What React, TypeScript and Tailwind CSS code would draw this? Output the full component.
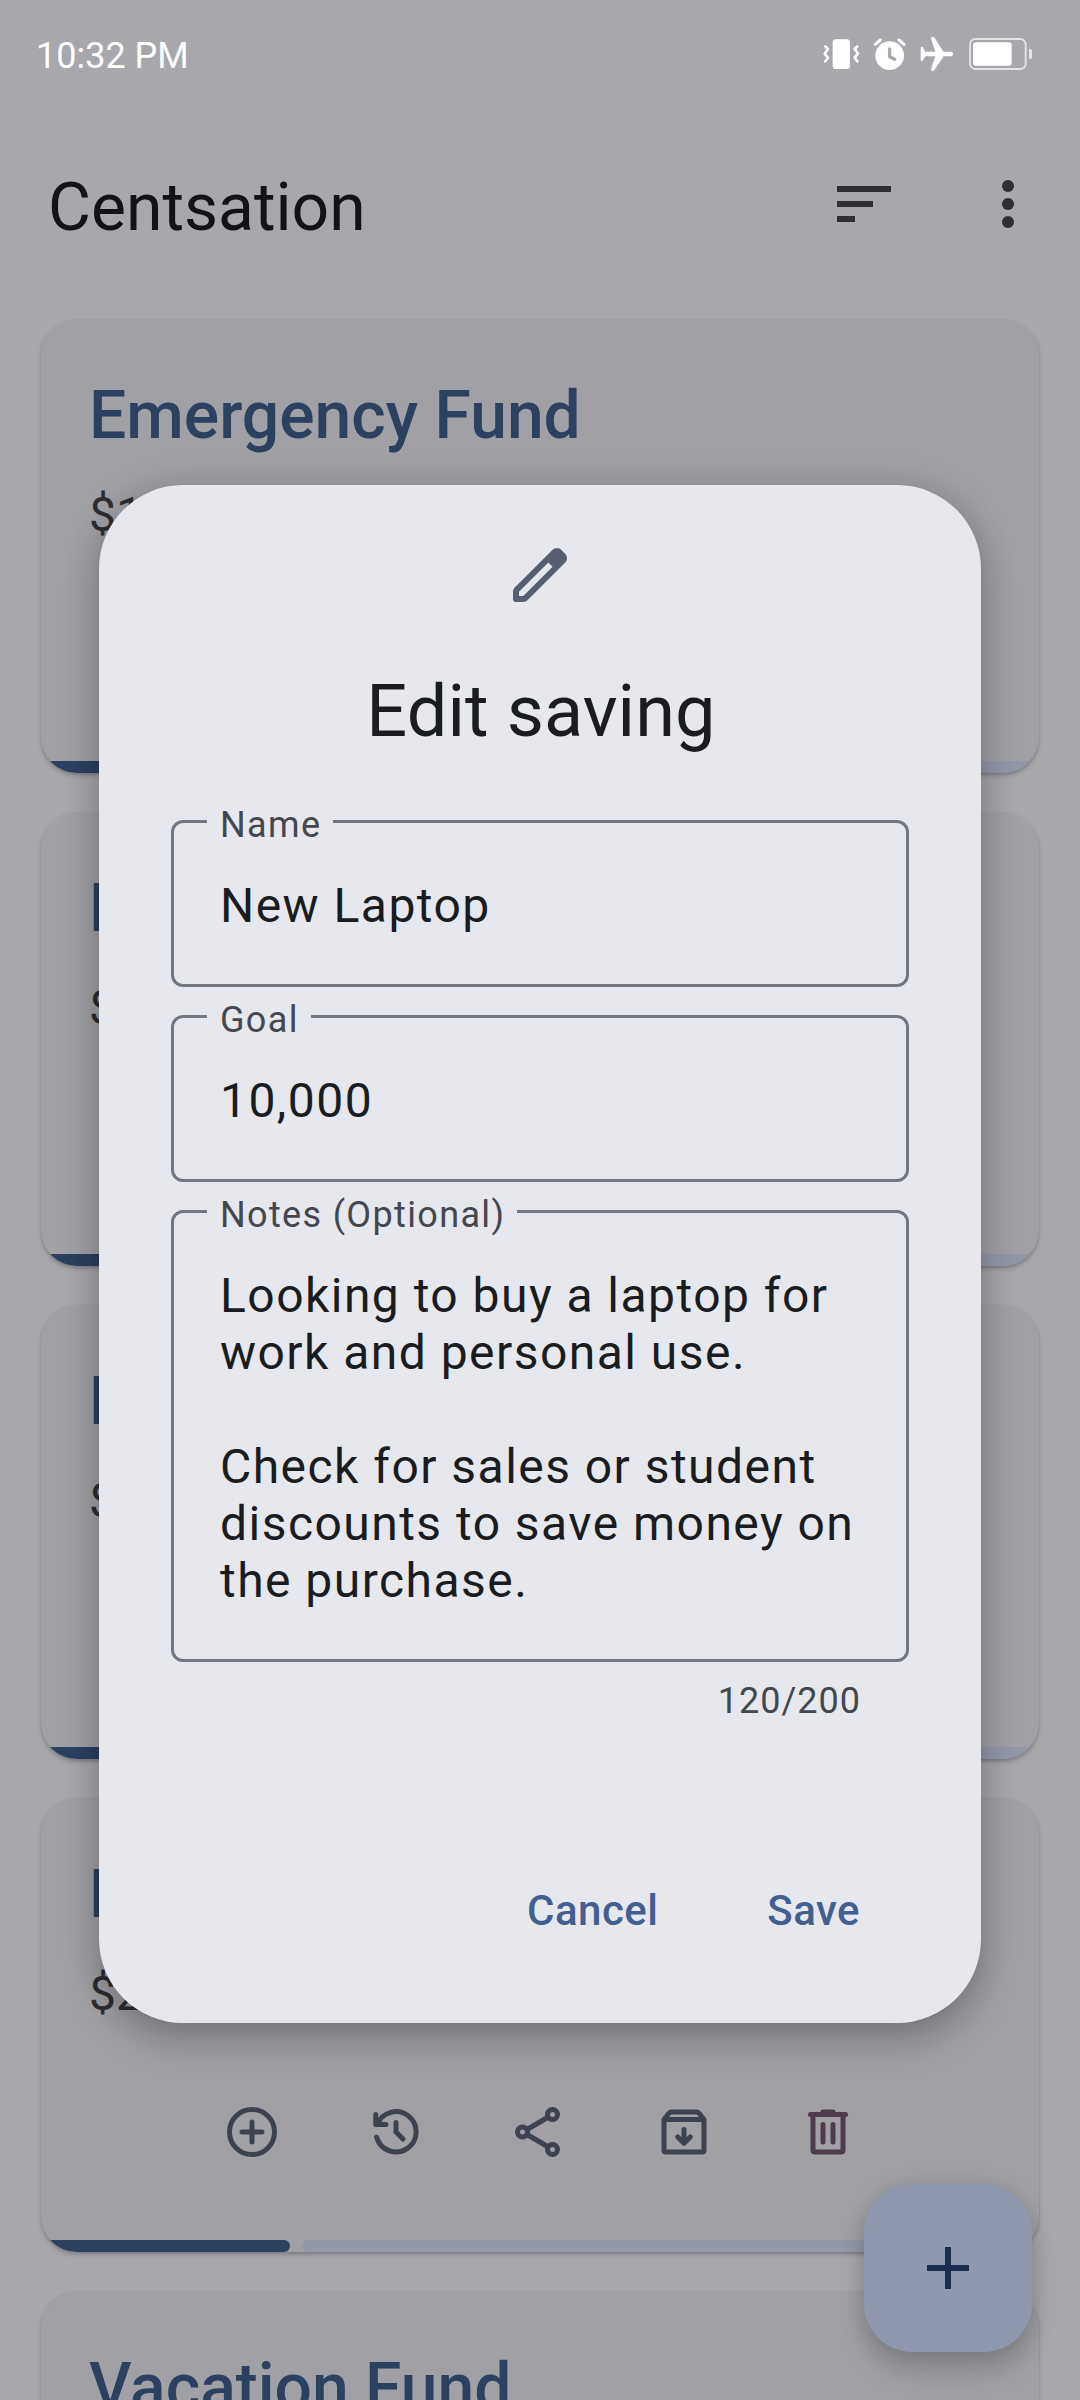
import type { ReactNode } from 'react';

type Saving = { name: string; amount: string; progress: number };

const savings: Saving[] = [
  { name: 'Emergency Fund', amount: '$15,000', progress: 249 },
  { name: 'Home Repairs', amount: '$800', progress: 249 },
  { name: 'New Bicycle', amount: '$350', progress: 249 },
  { name: 'New Laptop', amount: '$2500', progress: 249 },
  { name: 'Vacation Fund', amount: '$1200', progress: 249 },
];

function StatusIcons() {
  return (
    <div className="flex items-center text-white">
      <svg viewBox="20 0 116 150" className="h-[50px] w-[38.67px]" fill="none" stroke="currentColor">
        <rect x="52" y="28" width="52" height="89" rx="9" fill="currentColor" stroke="none" />
        <path d="M30 49 38 57 28 71 38 83 30 94M126 49 118 57 128 71 118 83 126 94" strokeWidth="8" strokeLinecap="round" strokeLinejoin="round" />
      </svg>
      <svg viewBox="136 0 170 150" className="h-[50px] w-[56.67px]" fill="none" stroke="currentColor">
        <circle cx="225" cy="77" r="43" fill="currentColor" stroke="none" />
        <path d="M182 43 197 30M253 30 268 43" strokeWidth="9" strokeLinecap="round" />
        <path d="M225 57V80L240 88" stroke="#a8a7ac" strokeWidth="10" strokeLinecap="round" strokeLinejoin="round" />
      </svg>
      <svg viewBox="306 0 120 150" className="h-[50px] w-10" fill="currentColor">
        <path d="M325 65H407Q414 65 414 72T407 79H325Z" />
        <path d="M348 26Q348 21 353 20.500Q357 20.500 359 24L386 66V78L359 119Q356 124 352 123.500Q347 122 348 117L361 78V66Z" />
        <path d="M317 54Q318 48 323 51L331 66V78L324 91Q319 96 317 90Z" />
      </svg>
      <svg viewBox="426 0 230 150" className="h-[50px] w-[76.67px]" fill="none">
        <rect x="465" y="27" width="167" height="90" rx="16" stroke="#e5e5e7" strokeWidth="5.500" />
        <rect x="474" y="37" width="116" height="70" rx="8" fill="currentColor" />
        <path d="M642 57h4q5 0 5 5v20q0 5-5 5h-4z" fill="#e5e5e7" />
      </svg>
    </div>
  );
}

function LineIcon({ children, className }: { children: ReactNode; className: string }) {
  return (
    <svg
      viewBox="0 0 24 24"
      className={className}
      fill="none"
      stroke="currentColor"
      strokeWidth="2"
      strokeLinecap="round"
      strokeLinejoin="round"
    >
      {children}
    </svg>
  );
}

function CardActions() {
  return (
    <div className="mt-[78px] flex justify-center gap-[84px] text-[#3d4250]">
      <LineIcon className="size-[60px]">
        <circle cx="12" cy="12" r="9" />
        <path d="M12 8v8M8 12h8" />
      </LineIcon>
      <LineIcon className="size-[60px]">
        <path d="M4.500 9A8.050 8.050 0 1 1 4.250 14.100" />
        <path d="M3.900 5V9H8M12 8.200V12L14.800 14.800" />
      </LineIcon>
      <LineIcon className="size-[60px]">
        <circle cx="17" cy="5" r="2" />
        <circle cx="17" cy="19" r="2" />
        <circle cx="5" cy="12" r="2" />
        <path d="M15.200 6.100 6.800 11M6.800 13 15.200 17.900" />
      </LineIcon>
      <LineIcon className="size-[60px]">
        <path d="M4 7V19.200Q4 20 4.800 20H19.200Q20 20 20 19.200V7L18.100 4.600Q17.600 4 17 4H7Q6.400 4 5.900 4.600Z" />
        <path d="M4.500 7H19.500" strokeLinecap="butt" />
        <path d="M12 11V16.300M9.500 14 12 16.500 14.500 14" />
      </LineIcon>
      <LineIcon className="size-[60px] text-[#4e3b4c]">
        <path d="M5 5H19" />
        <path d="M9 5V4Q9 3 10 3H14Q15 3 15 4V5Z" fill="currentColor" stroke="none" />
        <path d="M6 5V19.200Q6 20 6.800 20H17.200Q18 20 18 19.200V5M10 9V16M14 9V16" />
      </LineIcon>
    </div>
  );
}

function SavingCard({ saving }: { saving: Saving }) {
  return (
    <article className="flex h-[454px] shrink-0 flex-col overflow-hidden rounded-[36px] bg-[#a1a0a5] shadow-[0_3px_4px_rgba(0,0,0,0.2),0_1px_2px_rgba(0,0,0,0.08)]">
      <div className="flex-1 px-12 pt-[58px]">
        <h2 className="text-[66px] leading-[78px] font-medium text-[#2c4060]">{saving.name}</h2>
        <p className="mt-[30px] text-[48px] leading-[60px] text-[#2d2e32]">{saving.amount}</p>
        <CardActions />
      </div>
      <div className="flex h-3 gap-3">
        <div className="rounded-r-full bg-[#2c4060]" style={{ width: saving.progress }} />
        <div className="flex-1 rounded-l-full bg-[#9298a8]" />
      </div>
    </article>
  );
}

function Field({ label, children }: { label: string; children: ReactNode }) {
  return (
    <div className="relative rounded-[12px] border-[3px] border-[#757780] px-[46px] pt-[54px] pb-[50px]">
      <span className="absolute top-[-22px] left-[33px] bg-[#e6e8ed] pr-3 pl-[13px] text-[36px] leading-[48px] tracking-[1.35px] whitespace-nowrap text-[#44474e]">
        {label}
      </span>
      <div className="text-[48px] leading-[57px] tracking-[1.46px] whitespace-pre text-[#1a1c20]">{children}</div>
    </div>
  );
}

const notes = `Looking to buy a laptop for
work and personal use.

Check for sales or student
discounts to save money on
the purchase.`;

function EditDialog() {
  return (
    <div
      role="dialog"
      className="absolute top-[485px] left-[99px] flex h-[1538px] w-[882px] flex-col rounded-[84px] bg-[#e6e8ed] px-[72px] pt-[54px] shadow-[0_18px_36px_rgba(0,0,0,0.22),0_0_36px_rgba(0,0,0,0.12)]"
    >
      <svg viewBox="0 -960 960 960" className="size-[72px] self-center text-[#565f71]" fill="currentColor">
        <path d="M200-200h57l391-391-57-57-391 391v57Zm-40 80q-17 0-28.500-11.500T120-160v-97q0-16 6-30.500t17-25.500l505-504q12-11 26.500-17t30.500-6q16 0 31 6t26 18l55 56q12 11 17.500 26t5.500 30q0 16-5.500 30.500T817-647L313-143q-11 11-25.500 17t-30.500 6h-97Z" />
      </svg>
      <h1 className="mt-[53px] pl-[2px] text-center text-[72px] leading-[96px] tracking-[0.1px] text-[#1a1c20]">Edit saving</h1>
      <div className="mt-[60px] flex flex-col gap-7">
        <Field label="Name">New Laptop</Field>
        <Field label="Goal">10,000</Field>
        <Field label="Notes (Optional)">{notes}</Field>
      </div>
      <p className="mt-[15px] pr-[48px] text-right text-[36px] leading-[48px] tracking-[1px] text-[#44474e]">120/200</p>
      <div className="mt-[156px] flex justify-end gap-[109px] pr-[49px] text-[42px] leading-[60px] font-medium tracking-[0.45px] text-[#435f91]">
        <button>Cancel</button>
        <button>Save</button>
      </div>
    </div>
  );
}

export default function App() {
  return (
    <div className="relative h-[2400px] w-[1080px] overflow-hidden bg-[#a8a7ac] font-[Roboto,sans-serif]">
      <div className="flex h-[110px] items-center justify-between pr-[46.33px] pl-9">
        <span className="pt-[2px] text-[36px] text-white">10:32 PM</span>
        <StatusIcons />
      </div>
      <header className="flex h-[188px] items-center justify-between pr-9 pl-12 text-[#2e3035]">
        <h1 className="pt-[8px] text-[66px] leading-[78px] text-[#121318]">Centsation</h1>
        <div className="flex gap-[72px]">
          <svg viewBox="0 0 24 24" className="size-[72px]" fill="currentColor">
            <path d="M3 6h18v2H3zM3 11h12v2H3zM3 16h6v2H3z" />
          </svg>
          <svg viewBox="0 0 24 24" className="size-[72px]" fill="currentColor">
            <circle cx="12" cy="6" r="2" />
            <circle cx="12" cy="12" r="2" />
            <circle cx="12" cy="18" r="2" />
          </svg>
        </div>
      </header>
      <main className="flex flex-col gap-[39px] px-[41px] pt-[21px]">
        {savings.map((saving) => (
          <SavingCard key={saving.name} saving={saving} />
        ))}
      </main>
      <button className="absolute top-[2184px] left-[864px] grid size-[168px] place-items-center rounded-[48px] bg-[#8f98ac] text-[#1c2d50] shadow-[0_18px_24px_rgba(0,0,0,0.18),0_0_20px_rgba(0,0,0,0.1)]">
        <svg viewBox="0 0 24 24" className="size-[72px]" fill="currentColor">
          <path d="M19 13h-6v6h-2v-6H5v-2h6V5h2v6h6z" />
        </svg>
      </button>
      <EditDialog />
    </div>
  );
}
